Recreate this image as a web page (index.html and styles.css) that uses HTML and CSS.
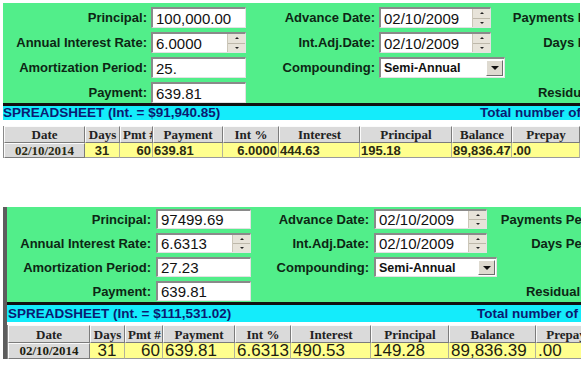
FILE: index.html
```html
<!DOCTYPE html>
<html lang="en">
<head>
    <meta charset="UTF-8">
    <title>Mortgage Spreadsheet</title>
    <link rel="stylesheet" href="styles.css">
</head>
<body>
    <div class="loan loan-first">
        <div class="form">
            <label class="lbl">Principal:</label>
            <div class="field"><span class="value">100,000.00</span></div>
            <label class="lbl">Advance Date:</label>
            <div class="field spin"><span class="value">02/10/2009</span><span class="spinner"><i class="up"></i><i class="down"></i></span></div>
            <label class="lbl side">Payments Per Year:</label>

            <label class="lbl">Annual Interest Rate:</label>
            <div class="field"><span class="value">6.0000</span><span class="spinner"><i class="up"></i><i class="down"></i></span></div>
            <label class="lbl">Int.Adj.Date:</label>
            <div class="field spin"><span class="value">02/10/2009</span><span class="spinner"><i class="up"></i><i class="down"></i></span></div>
            <label class="lbl side">Days Per Year:</label>

            <label class="lbl">Amortization Period:</label>
            <div class="field"><span class="value">25.</span></div>
            <label class="lbl">Compounding:</label>
            <div class="field select"><span class="value">Semi-Annual</span><span class="drop"></span></div>
            <span></span>

            <label class="lbl">Payment:</label>
            <div class="field"><span class="value">639.81</span></div>
            <span></span>
            <span></span>
            <label class="lbl side">Residual Value:</label>
        </div>
        <div class="sheet-bar">
            <span class="sheet-title">SPREADSHEET (Int. = $91,940.85)</span>
            <span class="sheet-total">Total number of payments: 300</span>
        </div>
        <table class="sheet">
            <tr>
                <th>Date</th><th>Days</th><th>Pmt #</th><th>Payment</th><th>Int %</th>
                <th>Interest</th><th>Principal</th><th>Balance</th><th>Prepay</th>
            </tr>
            <tr>
                <td class="date">02/10/2014</td>
                <td class="c">31</td>
                <td class="r">60</td>
                <td>639.81</td>
                <td class="r">6.0000</td>
                <td>444.63</td>
                <td>195.18</td>
                <td>89,836.47</td>
                <td>.00</td>
            </tr>
        </table>
    </div>

    <div class="loan loan-second">
        <div class="form">
            <label class="lbl">Principal:</label>
            <div class="field"><span class="value">97499.69</span></div>
            <label class="lbl">Advance Date:</label>
            <div class="field spin"><span class="value">02/10/2009</span><span class="spinner"><i class="up"></i><i class="down"></i></span></div>
            <label class="lbl side">Payments Per Year:</label>

            <label class="lbl">Annual Interest Rate:</label>
            <div class="field"><span class="value">6.6313</span><span class="spinner"><i class="up"></i><i class="down"></i></span></div>
            <label class="lbl">Int.Adj.Date:</label>
            <div class="field spin"><span class="value">02/10/2009</span><span class="spinner"><i class="up"></i><i class="down"></i></span></div>
            <label class="lbl side">Days Per Year:</label>

            <label class="lbl">Amortization Period:</label>
            <div class="field"><span class="value">27.23</span></div>
            <label class="lbl">Compounding:</label>
            <div class="field select"><span class="value">Semi-Annual</span><span class="drop"></span></div>
            <span></span>

            <label class="lbl">Payment:</label>
            <div class="field"><span class="value">639.81</span></div>
            <span></span>
            <span></span>
            <label class="lbl side">Residual Value:</label>
        </div>
        <div class="sheet-bar">
            <span class="sheet-title">SPREADSHEET (Int. = $111,531.02)</span>
            <span class="sheet-total">Total number of payments: 327</span>
        </div>
        <table class="sheet">
            <tr>
                <th>Date</th><th>Days</th><th>Pmt #</th><th>Payment</th><th>Int %</th>
                <th>Interest</th><th>Principal</th><th>Balance</th><th>Prepay</th>
            </tr>
            <tr>
                <td class="date">02/10/2014</td>
                <td class="c">31</td>
                <td class="r">60</td>
                <td>639.81</td>
                <td>6.6313</td>
                <td>490.53</td>
                <td>149.28</td>
                <td>89,836.39</td>
                <td>.00</td>
            </tr>
        </table>
    </div>
</body>
</html>
```

FILE: styles.css
```css
:root {
    --green: #52ee8a;
    --cyan: #14ecfb;
    --yellow: #ffff8e;
    --face: #dadada;
    --ink: #0d2614;
    --navy: #0b1a72;
}

body {
    margin: 0;
    background: #fff;
    font-family: 'Liberation Sans', Arial, sans-serif;
}

.loan {
    overflow: hidden;
    margin-left: 3px;
}

.loan-first {
    width: 577px;
    margin-top: 3px;
}

.loan-second {
    width: 574px;
    margin-top: 49px;
    border-left: 4px solid #5d5d5d;
}

/* input area */
.form {
    background: var(--green);
    display: grid;
    row-gap: 4px;
    align-items: center;
    box-sizing: border-box;
}

.loan-first .form {
    grid-template-columns: 148px 95px 133px 126px 129px;
    grid-auto-rows: 21px;
    height: 100px;
    padding-top: 4px;
}

.loan-second .form {
    grid-template-columns: 149px 95px 123px 123px 125px;
    grid-auto-rows: 20px;
    height: 95px;
    padding-top: 2px;
}

.lbl {
    font-size: 13px;
    font-weight: bold;
    color: var(--ink);
    text-align: right;
    padding-right: 4px;
    white-space: nowrap;
}

.loan-second .lbl {
    padding-right: 5px;
}

.loan .lbl.side {
    padding-right: 0;
}

.field {
    display: flex;
    height: 100%;
    box-sizing: border-box;
    background: #fff;
    border-top: 2px solid #8a8a8a;
    border-left: 2px solid #8a8a8a;
    border-right: 1px solid #e2e2e2;
    border-bottom: 1px solid #e2e2e2;
    font-size: 15px;
    color: #111;
}

.field .value {
    flex: 1;
    padding-left: 3px;
    display: flex;
    align-items: center;
    white-space: nowrap;
}

.loan-first .spin {
    width: 112px;
}

.loan-second .spin {
    width: 113px;
}

.spinner {
    width: 17px;
    display: flex;
    flex-direction: column;
    background: #e7e3d9;
    border-left: 1px solid #cbc6b8;
}

.spinner i {
    flex: 1;
    display: flex;
    align-items: center;
    justify-content: center;
}

.spinner i::before {
    content: "";
    border-left: 2px solid transparent;
    border-right: 2px solid transparent;
}

.spinner .up {
    border-bottom: 1px solid #bdb8aa;
}

.spinner .up::before {
    border-bottom: 2px solid #222;
}

.spinner .down::before {
    border-top: 2px solid #222;
}

.select .value {
    font-size: 12.5px;
    font-weight: bold;
}

.drop {
    width: 15px;
    margin: 1px;
    background: #dedad0;
    border: 1px solid;
    border-color: #fff #6e6e6e #6e6e6e #fff;
    display: flex;
    align-items: center;
    justify-content: center;
}

.drop::before {
    content: "";
    border-left: 4px solid transparent;
    border-right: 4px solid transparent;
    border-top: 4px solid #111;
}

/* spreadsheet strip */
.sheet-bar {
    display: flex;
    background: var(--cyan);
    border-top: 3px solid #111;
    color: var(--navy);
    font-size: 13.5px;
    font-weight: bold;
    white-space: nowrap;
}

.loan-first .sheet-bar {
    height: 14px;
    line-height: 14px;
}

.loan-second .sheet-bar {
    height: 17px;
    line-height: 17px;
    padding-left: 1px;
}

.loan-first .sheet-title {
    flex: 0 0 477px;
}

.loan-second .sheet-title {
    flex: 0 0 469px;
}

.sheet {
    border-collapse: separate;
    border-spacing: 0;
    table-layout: fixed;
    border-left: 1px solid #8a8a8a;
}

.loan-first .sheet {
    width: 576px;
    margin-top: 6px;
}

.loan-second .sheet {
    width: 588px;
    margin-top: 3px;
}

.sheet th,
.sheet td {
    box-sizing: border-box;
    padding: 0 2px;
    white-space: nowrap;
    overflow: hidden;
}

.sheet th {
    background: var(--face);
    font-family: 'Liberation Serif', 'Times New Roman', serif;
    font-size: 13px;
    font-weight: bold;
    color: #222;
    border: 1px solid;
    border-color: #fbfbfb #7b7b7b #7b7b7b #fbfbfb;
}

.sheet td {
    background: var(--yellow);
    color: #2b2b12;
    border-right: 1px solid #b3b39a;
    border-bottom: 1px solid #9a9a9a;
    text-align: left;
}

.sheet td.date {
    background: var(--face);
    font-family: 'Liberation Serif', 'Times New Roman', serif;
    font-size: 13px;
    font-weight: bold;
    text-align: center;
    border: 1px solid;
    border-color: #fbfbfb #7b7b7b #7b7b7b #fbfbfb;
}

.sheet td.c {
    text-align: center;
}

.sheet td.r {
    text-align: right;
}

.loan-first th {
    height: 17px;
    line-height: 14px;
}

.loan-first td {
    height: 15px;
    line-height: 13px;
    font-size: 13px;
    font-weight: bold;
    padding: 0 1px;
}

.loan-second th {
    height: 18px;
    line-height: 15px;
}

.loan-second td {
    height: 16px;
    line-height: 14px;
    font-size: 17px;
    color: #1d1d10;
}

.loan-first th:nth-child(1) { width: 81px; }
.loan-first th:nth-child(2) { width: 35px; }
.loan-first th:nth-child(3) { width: 33px; }
.loan-first th:nth-child(4) { width: 70px; }
.loan-first th:nth-child(5) { width: 56px; }
.loan-first th:nth-child(6) { width: 81px; }
.loan-first th:nth-child(7) { width: 92px; }
.loan-first th:nth-child(8) { width: 60px; }
.loan-first th:nth-child(9) { width: 68px; }

.loan-second th:nth-child(1) { width: 82px; }
.loan-second th:nth-child(2) { width: 35px; }
.loan-second th:nth-child(3) { width: 38px; }
.loan-second th:nth-child(4) { width: 72px; }
.loan-second th:nth-child(5) { width: 56px; }
.loan-second th:nth-child(6) { width: 80px; }
.loan-second th:nth-child(7) { width: 78px; }
.loan-second th:nth-child(8) { width: 87px; }
.loan-second th:nth-child(9) { width: 60px; }
```
